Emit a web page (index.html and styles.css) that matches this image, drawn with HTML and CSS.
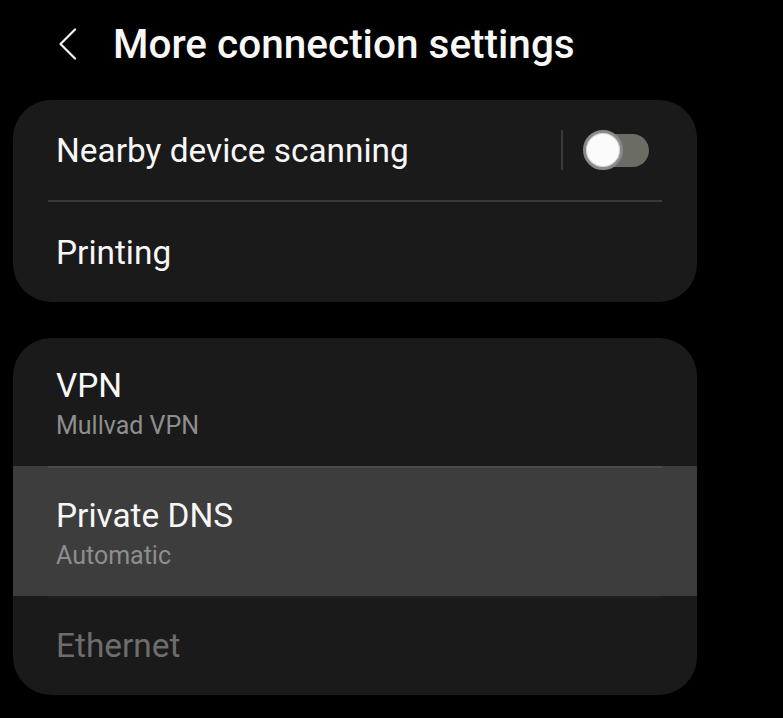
FILE: index.html
```html
<!DOCTYPE html>
<html lang="en">
<head>
<meta charset="utf-8">
<title>More connection settings</title>
<link rel="stylesheet" href="styles.css">
</head>
<body>
<header class="header">
  <svg class="back" width="20" height="32" viewBox="0 0 20 32" aria-hidden="true">
    <path d="M17 1.5 L2.5 16 L17 30.5" fill="none" stroke="#f2f2f2" stroke-width="2.2" stroke-linecap="round" stroke-linejoin="round"/>
  </svg>
  <h1 class="title">More connection settings</h1>
</header>
<main class="content">
  <section class="card">
    <div class="row row-short">
      <span class="label">Nearby device scanning</span>
      <div class="switch-wrap">
        <span class="vdiv"></span>
        <span class="switch"><span class="track"></span><span class="thumb"></span></span>
      </div>
    </div>
    <div class="divider"></div>
    <div class="row row-short">
      <span class="label">Printing</span>
    </div>
  </section>
  <section class="card">
    <div class="row row-tall">
      <span class="label">VPN</span>
      <span class="sub">Mullvad VPN</span>
    </div>
    <div class="row row-tall row-active">
      <span class="label">Private DNS</span>
      <span class="sub">Automatic</span>
    </div>
    <div class="row row-last">
      <span class="label label-disabled">Ethernet</span>
    </div>
  </section>
</main>
</body>
</html>
```
FILE: styles.css
```css
html, body {
  margin: 0;
  padding: 0;
  background: #000;
}
body {
  width: 783px;
  height: 718px;
  overflow: hidden;
  font-family: Roboto, "Noto Sans", "Liberation Sans", sans-serif;
  color: #f7f7f7;
}
.header {
  height: 88px;
  display: flex;
  align-items: center;
  padding-left: 58px;
  box-sizing: border-box;
}
.back {
  display: block;
  margin-right: 35px;
}
.title {
  margin: 0;
  font-size: 40.5px;
  font-weight: 500;
  color: #f8f8f8;
}
.content {
  display: flex;
  flex-direction: column;
  gap: 36px;
  padding: 12px 86px 0 13px;
}
.card {
  background: #1a1a1a;
  border-radius: 38px;
  overflow: hidden;
  display: flex;
  flex-direction: column;
}
.row {
  display: flex;
  box-sizing: border-box;
  padding: 0 48px 0 43px;
}
.row-short {
  height: 100px;
  align-items: center;
  justify-content: space-between;
}
.row-tall {
  height: 128px;
  flex-direction: column;
  justify-content: flex-start;
  padding-top: 28px;
}
.row-active {
  background: linear-gradient(#4a4a4a, #4a4a4a) 35px 0 / calc(100% - 70px) 2px no-repeat, #3d3d3d;
  height: 130px;
  padding-top: 30px;
}
.row-last {
  height: 99px;
  align-items: center;
  background: linear-gradient(#1f1f1f, #1f1f1f) 35px 0 / calc(100% - 70px) 2px no-repeat;
}
.label {
  font-size: 33.4px;
  line-height: 40px;
  color: #f7f7f7;
}
.row-short .label {
  padding-top: 2px;
}
.label-disabled {
  color: #6d6d6d;
}
.sub {
  font-size: 25px;
  line-height: 32px;
  margin-top: 4px;
  color: #8e8e8e;
}
.divider {
  height: 2px;
  margin: 0 35px;
  background: #383838;
}
.switch-wrap {
  display: flex;
  align-items: center;
  gap: 20px;
}
.vdiv {
  width: 2px;
  height: 40px;
  background: #3a3a3a;
}
.switch {
  position: relative;
  width: 66px;
  height: 40px;
  display: flex;
  align-items: center;
  justify-content: flex-end;
}
.track {
  width: 60px;
  height: 33px;
  border-radius: 17px;
  background: #6b6c64;
}
.thumb {
  position: absolute;
  left: 0;
  top: 0;
  width: 40px;
  height: 40px;
  box-sizing: border-box;
  border-radius: 50%;
  background: #fbfbfb;
  border: 3px solid #8a8a8a;
  box-shadow: inset 0 0 0 1px #d6d6d6;
}
```
